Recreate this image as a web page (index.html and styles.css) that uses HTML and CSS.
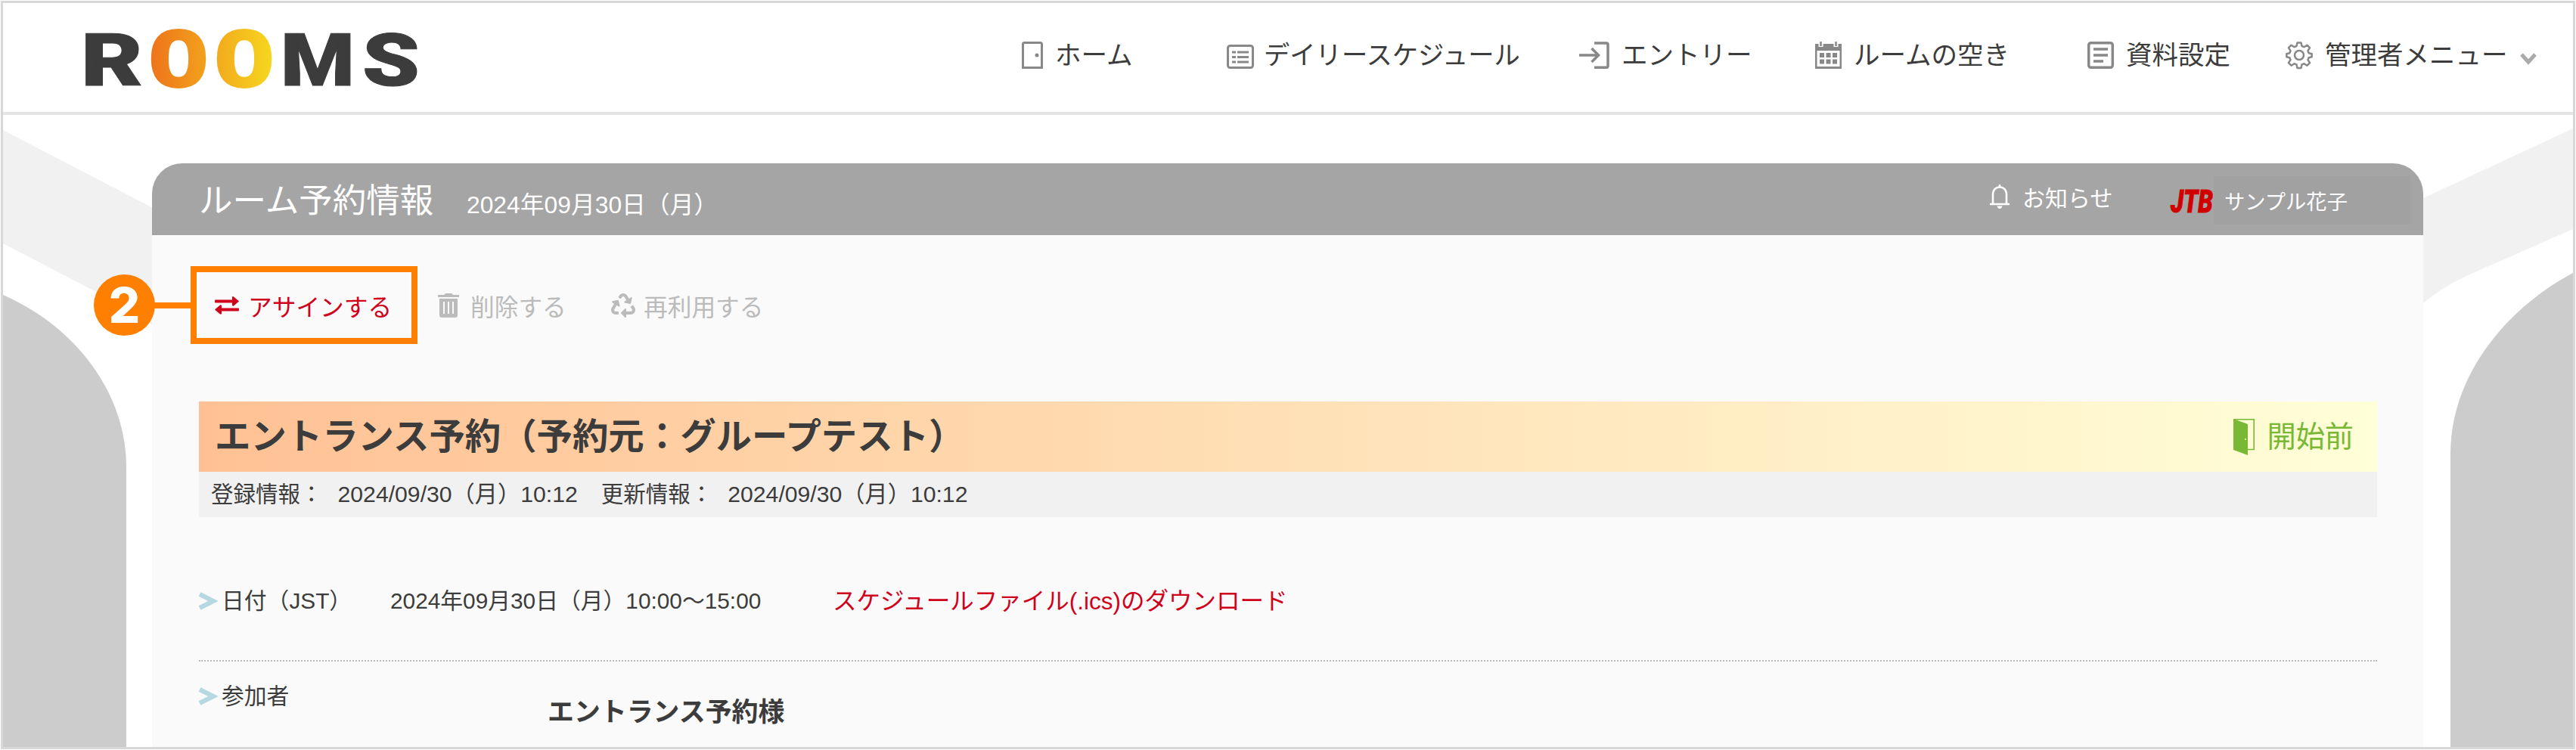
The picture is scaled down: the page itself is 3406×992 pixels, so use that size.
FILE: index.html
```html
<!DOCTYPE html>
<html lang="ja">
<head>
    <meta charset="UTF-8">
    <meta name="viewport" content="width=device-width, initial-scale=1.0">
    <title>ROOMS</title>
    <link rel="stylesheet" href="styles.css">
</head>
<body>

    <div class="screen">
        <!-- Background shapes -->
        <svg class="backdrop" viewBox="4 4 3398 984">
            <path fill="#f1f1f1" d="M4 172L204 276V433C180 411 155 399 127 386L77 360L4 322Z" />
            <path fill="#f1f1f1" d="M3402 170V303L3261 365Q3225 382 3202 403V263Z" />
            <path fill="#ccc" d="M4 390C100 432 167 520 167 618V988H4Z" />
            <path fill="#ccc" d="M3402 361C3310 410 3240 500 3240 600V988H3402Z" />
        </svg>

        <header class="header">
            <svg class="logo" viewBox="108 34 450 90">
                <defs>
                    <linearGradient id="logoGradient" gradientUnits="userSpaceOnUse" x1="201" y1="0" x2="357" y2="0">
                        <stop offset="0" stop-color="#ee751a" />
                        <stop offset="1" stop-color="#f6d51f" />
                    </linearGradient>
                </defs>
                <g class="logo-dark">
                    <text x="107" y="113" textLength="82" lengthAdjust="spacingAndGlyphs">R</text>
                    <text x="371" y="113" textLength="98" lengthAdjust="spacingAndGlyphs">M</text>
                    <text x="479" y="113" textLength="76" lengthAdjust="spacingAndGlyphs">S</text>
                </g>
                <g class="logo-color">
                    <text x="195" y="115" textLength="82" lengthAdjust="spacingAndGlyphs">O</text>
                    <text x="282" y="115" textLength="82" lengthAdjust="spacingAndGlyphs">O</text>
                </g>
            </svg>

            <nav class="nav">
                <a class="nav-item">
                    <svg width="28" height="36" viewBox="0 0 28 36" fill="none" stroke="#888" stroke-width="3">
                        <path d="M1.5 34.5V3.5Q1.5 1.5 3.5 1.5H24.5Q26.5 1.5 26.5 3.5V34.5Z" />
                        <circle cx="20" cy="18" r="2.5" fill="#888" stroke="none" />
                    </svg>
                    ホーム
                </a>
                <a class="nav-item nav-daily">
                    <svg class="icon-list" width="36" height="32" viewBox="0 0 36 32" fill="none" stroke="#888" stroke-width="3">
                        <rect x="1.5" y="1.5" width="33" height="29" rx="3" />
                        <path d="M7 10H12M7 16.5H12M7 23H12M14 10H29M14 16.5H29M14 23H29" />
                    </svg>
                    デイリースケジュール
                </a>
                <a class="nav-item">
                    <svg width="40" height="36" viewBox="0 0 40 36" fill="none" stroke="#888" stroke-width="3.5">
                        <path d="M20 2H36Q38 2 38 4V32Q38 34.3 36 34.3H20" />
                        <path d="M0 18H25M16.5 9L25.5 18L16.5 27" />
                    </svg>
                    エントリー
                </a>
                <a class="nav-item">
                    <svg width="35" height="36" viewBox="0 0 35 36">
                        <path fill="#888" fill-rule="evenodd" d="M0 3H35V36H0ZM2.5 12V33H32.5V12Z" />
                        <path fill="#888" d="M6 15h6v6h-6zM14.5 15h6v6h-6zM23 15h6v6h-6zM6 23.500h6v6h-6zM14.5 23.500h6v6h-6zM23 23.500h6v6h-6z" />
                        <path stroke="#fff" stroke-width="6" d="M7.5 0V7M27.5 0V7" />
                        <path stroke="#888" stroke-width="2.5" d="M7.5 0V6M27.5 0V6" />
                    </svg>
                    ルームの空き
                </a>
                <a class="nav-item">
                    <svg width="35" height="36" viewBox="0 0 35 36" fill="none" stroke="#888" stroke-width="3.5">
                        <rect x="1.7" y="1.7" width="31.6" height="32.6" rx="3" />
                        <path d="M8 10H27M8 18H27M8 26H21" />
                    </svg>
                    資料設定
                </a>
                <a class="nav-item">
                    <svg width="36" height="36" viewBox="0 0 36 36" fill="none" stroke="#888" stroke-width="2.5" stroke-linejoin="round">
                        <path d="M15.500 1.500h5l1 4.500 3 1.200 4-2.500 3.500 3.500-2.500 4 1.200 3 4 1v4l-4 1-1.200 3 2.500 4-3.500 3.500-4-2.500-3 1.200-1 4.500h-5l-1-4.500-3-1.200-4 2.500-3.500-3.500 2.500-4-1.200-3-4-1v-4l4-1 1.200-3-2.500-4 3.500-3.500 4 2.500 3-1.200z" />
                        <circle cx="18" cy="18" r="6" />
                    </svg>
                    管理者メニュー
                    <svg class="icon-down" width="22" height="16" viewBox="0 0 22 16" fill="none" stroke="#aaa" stroke-width="5">
                        <path d="M2 2L11 12L20 2" />
                    </svg>
                </a>
            </nav>
        </header>

        <main class="panel">
            <div class="panel-head">
                <h1>ルーム予約情報</h1>
                <span class="today">2024年09月30日（月）</span>
                <a class="notice">
                    <svg width="26" height="32" viewBox="0 0 26 32" fill="none" stroke="#fff" stroke-width="2.6">
                        <path d="M0 26H26M4 25V13C4 7 8 3.500 13 3.500S22 7 22 13V25M13 0V4" />
                        <path fill="#fff" stroke="none" d="M9.500 28.500H16.500Q15.500 32 13 32T9.500 28.500Z" />
                    </svg>
                    お知らせ
                </a>
                <svg class="company" width="60" height="40" viewBox="0 0 60 40">
                    <text x="3" y="34" textLength="56" lengthAdjust="spacingAndGlyphs">JTB</text>
                </svg>
                <div class="user">サンプル花子</div>
            </div>

            <div class="toolbar">
                <a class="tool assign">
                    <span class="step">2</span>
                    <svg width="32" height="24" viewBox="0 0 32 24" fill="#d0021b">
                        <path d="M1 4.500H23V0.500Q24 -.5 25 .5L31.500 6Q32 6.500 31.500 7L25 12.500Q24 13 23 12V8.500H1Q0 8.500 0 7.500V5.500Q0 4.500 1 4.500Z" />
                        <path d="M31 15.500H9V12Q8 11 7 11.500L.5 17Q0 17.500 .5 18L7 23.500Q8 24 9 23V19.500H31Q32 19.500 32 18.500V16.500Q32 15.500 31 15.500Z" />
                    </svg>
                    アサインする
                </a>
                <a class="tool delete">
                    <svg width="28" height="32" viewBox="0 0 28 32" fill="#bbb">
                        <path d="M0 2H8L10 0H18L20 2H28V5H0Z" />
                        <path fill-rule="evenodd" d="M2 7H26V29Q26 32 23 32H5Q2 32 2 29ZM7 11V27H9V11ZM13 11V27H15V11ZM19 11V27H21V11Z" />
                    </svg>
                    削除する
                </a>
                <a class="tool reuse">
                    <svg width="32" height="32" viewBox="0 0 512 512" fill="#bbb">
                        <path d="M184.561 261.903c3.232 13.997-12.123 24.635-24.068 17.168l-40.736-25.455-50.867 81.402C55.606 356.273 70.960 384 96.012 384H148c6.627 0 12 5.373 12 12v40c0 6.627-5.373 12-12 12H96.115c-75.334 0-121.302-83.048-81.408-146.880l50.822-81.388-40.725-25.448c-12.081-7.547-8.966-25.961 4.879-29.158l110.237-25.450c8.611-1.988 17.201 3.381 19.189 11.990l25.452 110.237zm98.561-182.915 41.289 66.076-40.740 25.457c-12.051 7.528-9 25.953 4.879 29.158l110.237 25.450c8.672 1.999 17.215-3.438 19.189-11.990l25.450-110.237c3.197-13.844-11.990-24.719-24.068-17.168l-40.687 25.424-41.263-66.082c-37.521-60.033-125.209-60.171-162.816 0l-17.963 28.766c-3.510 5.620-1.800 13.021 3.820 16.533l33.919 21.195c5.620 3.512 13.024 1.803 16.536-3.817l17.961-28.743c12.712-20.341 41.973-19.676 54.257-.022zM497.288 301.120l-27.515-44.065c-3.511-5.623-10.916-7.334-16.538-3.821l-33.861 21.159c-5.620 3.512-7.330 10.915-3.818 16.536l27.564 44.112c13.257 21.211-2.057 48.960-27.136 48.960H320V336.020c0-14.213-17.242-21.383-27.313-11.313l-80 79.981c-6.249 6.248-6.249 16.379 0 22.627l80 79.989C302.689 517.308 320 510.300 320 495.989V448h95.880c75.274 0 121.335-82.997 81.408-146.880z" />
                    </svg>
                    再利用する
                </a>
            </div>

            <section class="detail">
                <div class="detail-title">
                    <h2>エントランス予約（予約元：グループテスト）</h2>
                    <span class="status">
                        <svg width="28" height="48" viewBox="0 0 28 48" fill="#79b834">
                            <path d="M0 0L19 7V48L0 41Z" />
                            <path fill="none" stroke="#79b834" stroke-width="1.6" d="M0 .8H27.200V40.500H19" />
                            <circle cx="16" cy="27" r="1" fill="#ffc" />
                        </svg>
                        開始前
                    </span>
                </div>
                <div class="detail-log">
                    <span>登録情報：</span><span class="stamp">2024/09/30（月）10:12</span>
                    <span>更新情報：</span><span class="stamp">2024/09/30（月）10:12</span>
                </div>

                <div class="row">
                    <svg class="arrow" width="24" height="24" viewBox="0 0 24 24"><path d="M1 3L19 12L1 21" /></svg>
                    <span class="label">日付（JST）</span>
                    <span class="date">2024年09月30日（月）10:00～15:00</span>
                    <a class="download">スケジュールファイル(.ics)のダウンロード</a>
                </div>
                <div class="row members">
                    <svg class="arrow" width="24" height="24" viewBox="0 0 24 24"><path d="M1 3L19 12L1 21" /></svg>
                    <span class="label">参加者</span>
                    <strong class="guest">エントランス予約様</strong>
                </div>
            </section>
        </main>
    </div>

</body>
</html>
```

FILE: styles.css
```css
/* Reset some default styles */
body, h1, h2 {
    margin: 0;
    padding: 0;
}

* {
    box-sizing: border-box;
}

body {
    background: #fff;
    color: #3c3c3c;
    font-family: "Liberation Sans", "Noto Sans CJK JP", sans-serif;
}

svg {
    display: block;
    flex: none;
    overflow: visible;
}

.screen {
    position: relative;
    width: 3404px;
    height: 990px;
    margin: 1px;
    border: 3px solid #d8d8d8;
}

.backdrop {
    position: absolute;
    top: 0;
    left: 0;
    width: 3398px;
    height: 984px;
    z-index: -1;
}

/* Header */
.header {
    display: flex;
    height: 148px;
    padding-left: 104px;
    border-bottom: 4px solid #e4e4e4;
    background: #fff;
}

.logo {
    width: 450px;
    height: 90px;
    margin-top: 30px;
}

.logo-dark {
    font-family: Roboto, sans-serif;
    font-size: 97px;
    font-weight: 900;
    fill: #3c3c3c;
    stroke: #3c3c3c;
    stroke-width: 1;
}

.logo-color {
    font-family: "DejaVu Sans Mono", monospace;
    font-size: 101px;
    font-weight: bold;
    fill: url(#logoGradient);
    stroke: url(#logoGradient);
    stroke-width: 2;
}

.nav {
    display: grid;
    grid-template-columns: 271px 466px 312px 360px 262px 360px;
    height: 36px;
    margin: 50px 0 0 793px;
}

.nav-item {
    display: flex;
    align-items: center;
    gap: 16px;
    font-size: 34.5px;
    line-height: 38px;
    white-space: nowrap;
}

.nav-daily {
    gap: 14px;
    font-size: 34.3px;
}

.icon-list {
    margin: 4px -1px 0 0;
}

.icon-down {
    margin: 9px 0 0 0;
}

/* Panel */
.panel {
    width: 3003px;
    height: 772px;
    margin: 64px 0 0 197px;
    background: #fafafa;
    border-radius: 40px 40px 0 0;
}

.panel-head {
    display: flex;
    height: 95px;
    padding-left: 62px;
    border-radius: 40px 40px 0 0;
    background: #a5a5a5;
    color: #fff;
    white-space: nowrap;
}

.panel-head h1 {
    width: 354px;
    font-size: 44.5px;
    font-weight: normal;
    line-height: 100px;
}

.today {
    width: 2014px;
    font-size: 31.8px;
    line-height: 110px;
}

.notice {
    display: flex;
    gap: 17px;
    width: 236px;
    padding-top: 28px;
    font-size: 30px;
    line-height: 37px;
}

.company {
    margin-top: 31px;
    fill: #d00000;
    stroke: #d00000;
    stroke-width: 1;
    font-size: 43px;
    font-style: italic;
    font-weight: 900;
    font-family: Roboto, sans-serif;
}

.user {
    width: 260px;
    height: 64px;
    margin-top: 17px;
    padding-left: 14px;
    background: #a1a1a1;
    font-size: 27.3px;
    line-height: 69px;
}

/* Toolbar */
.toolbar {
    display: flex;
    height: 103px;
    margin: 41px 0 0 51px;
    color: #bbb;
    font-size: 31.7px;
    white-space: nowrap;
}

.tool {
    display: flex;
    align-items: center;
}

.assign {
    position: relative;
    width: 300px;
    padding-left: 24px;
    gap: 12px;
    border: 8px solid #ff8000;
    color: #d0021b;
}

/* Line between the step number and the box */
.assign::before {
    content: "";
    position: absolute;
    top: 40px;
    left: -56px;
    width: 50px;
    height: 8px;
    background: #ff8000;
}

.step {
    position: absolute;
    top: 3px;
    left: -136px;
    width: 81px;
    height: 81px;
    border-radius: 50%;
    background: #ff8000;
    color: #fff;
    font-family: Inter, sans-serif;
    font-size: 65px;
    font-weight: 800;
    line-height: 81px;
    text-align: center;
}

.delete {
    width: 229px;
    padding-left: 27px;
    gap: 15px;
}

.reuse {
    padding-left: 27px;
    gap: 11px;
}

/* Reservation detail */
.detail {
    width: 2880px;
    margin: 76px 0 0 62px;
}

.detail-title {
    display: flex;
    justify-content: space-between;
    align-items: center;
    height: 93px;
    padding: 0 31px 0 21px;
    background: linear-gradient(to right, #ffc194, #ffffd8);
}

.detail-title h2 {
    font-size: 47.4px;
    line-height: 90px;
}

.status {
    display: flex;
    align-items: center;
    gap: 16px;
    color: #79b834;
    font-size: 38.2px;
    line-height: 46px;
}

.detail-log {
    display: flex;
    height: 60px;
    padding-left: 16px;
    background: #f1f1f1;
    font-size: 29.5px;
    line-height: 59px;
}

.stamp {
    margin: 0 31px 0 20px;
    font-size: 30.2px;
}

.row {
    display: flex;
    align-items: center;
    height: 191px;
    padding-top: 33px;
    border-bottom: 2px dotted #bbb;
    font-size: 29.8px;
    line-height: 40px;
    white-space: nowrap;
}

.arrow {
    fill: none;
    stroke: #b5d8e2;
    stroke-width: 6;
}

.label {
    width: 221px;
    padding-left: 6px;
}

.date {
    width: 593px;
    padding-left: 8px;
}

.download {
    color: #d0021b;
    font-size: 31.5px;
}

.members {
    height: 110px;
    align-items: flex-start;
    border-bottom: none;
    padding-top: 26px;
}

.members .arrow {
    margin-top: 8px;
}

.guest {
    padding: 21px 0 0 216px;
    font-size: 34.9px;
}
```
